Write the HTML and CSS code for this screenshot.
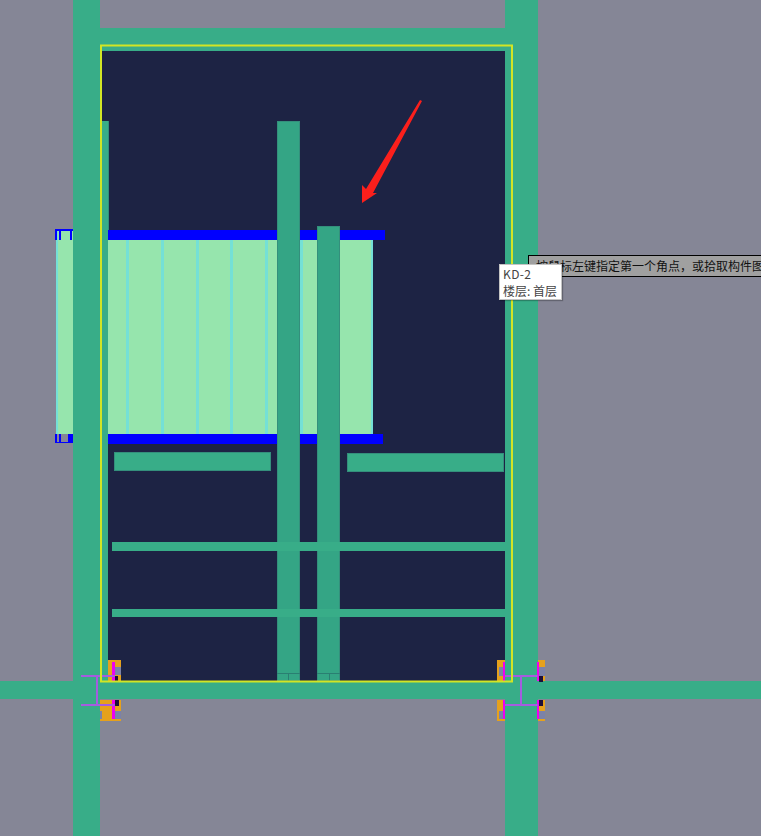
FILE: index.html
```html
<!DOCTYPE html>
<html lang="zh">
<head>
<meta charset="utf-8">
<title>KD-2</title>
<link rel="stylesheet" href="styles.css">
</head>
<body>
<main class="viewport">
<svg class="drawing" width="761" height="836" viewBox="0 0 761 836" shape-rendering="crispEdges">
  <rect class="wall" x="100" y="28" width="405" height="23"/>
  <rect class="room" x="102" y="51" width="403" height="630"/>

  <rect class="wall" x="102" y="121" width="6" height="560"/>
  <rect class="seam-fill" x="108" y="121" width="1" height="109"/>
  <rect class="beam" x="108" y="230" width="277" height="10"/>
  <rect class="slab" x="108" y="240" width="264" height="194"/>
  <rect class="beam" x="108" y="434" width="275" height="10"/>
  <g class="cyan">
    <rect x="126" y="240" width="3" height="194"/>
    <rect x="161" y="240" width="3" height="194"/>
    <rect x="196" y="240" width="3" height="194"/>
    <rect x="230" y="240" width="3" height="194"/>
    <rect x="265" y="240" width="3" height="194"/>
    <rect x="300" y="240" width="3" height="194"/>
    <rect x="371" y="240" width="2" height="194"/>
  </g>

  <rect class="slab" x="56" y="231" width="17" height="203"/>
  <rect class="cyan" x="56" y="231" width="2" height="203"/>
  <g class="beam">
    <rect x="55" y="229" width="18" height="2"/>
    <rect x="55" y="231" width="2" height="9"/>
    <rect x="59" y="231" width="2" height="9"/>
    <rect x="70" y="231" width="2" height="9"/>
    <rect x="55" y="434" width="2" height="9"/>
    <rect x="59" y="434" width="2" height="9"/>
    <rect x="68" y="434" width="5" height="9"/>
    <rect x="55" y="442" width="18" height="1"/>
  </g>

  <rect class="pillar" x="277.500" y="121.500" width="22" height="559"/>
  <rect class="pillar" x="317.500" y="226.500" width="22" height="454"/>
  <path class="seam" d="M277 673.500H300M288.500 673V681M317 673.500H340M329.500 673V681"/>

  <rect class="wall edged" x="114.500" y="452.500" width="156" height="18"/>
  <rect class="wall edged" x="347.500" y="453.500" width="156" height="18"/>
  <rect class="wall" x="112" y="542" width="393" height="9"/>
  <rect class="wall" x="112" y="609" width="393" height="8"/>

  <rect class="wall" x="73" y="0" width="27" height="836"/>
  <rect class="wall" x="505" y="0" width="33" height="836"/>
  <rect class="wall" x="0" y="681" width="761" height="18"/>

  <g>
    <rect class="amber" x="108" y="660" width="13" height="21"/>
    <rect class="amber" x="100" y="700" width="21" height="21"/>
    <rect class="amber" x="497" y="660" width="8" height="21"/>
    <rect class="amber" x="497" y="700" width="8" height="21"/>
    <rect class="amber" x="538" y="660" width="7" height="21"/>
    <rect class="amber" x="538" y="700" width="7" height="21"/>
    <rect class="steel" x="115" y="667" width="6" height="8"/>
    <rect class="steel" x="100" y="711" width="2" height="8"/>
    <rect class="steel" x="115" y="711" width="6" height="8"/>
    <rect class="steel" x="499" y="667" width="4" height="9"/>
    <rect class="steel" x="499" y="711" width="4" height="8"/>
    <rect class="steel" x="539" y="667" width="6" height="9"/>
    <rect class="steel" x="539" y="711" width="6" height="8"/>
    <rect class="ink" x="115" y="676" width="3" height="5"/>
    <rect class="ink" x="115" y="700" width="4" height="6"/>
    <rect class="ink" x="539" y="676" width="4" height="6"/>
    <rect class="ink" x="539" y="700" width="4" height="6"/>
    <rect class="magenta" x="112" y="662" width="3" height="19"/>
    <rect class="magenta" x="112" y="700" width="3" height="19"/>
    <rect class="magenta" x="503" y="662" width="2" height="19"/>
    <rect class="magenta" x="503" y="700" width="2" height="19"/>
    <rect class="magenta" x="537" y="662" width="2" height="19"/>
    <rect class="magenta" x="537" y="700" width="2" height="19"/>
  </g>
  <path class="violet" d="M81 676H115M81 705H115M96.500 676V705M505 676H538M505 705H538M520.500 676V705"/>
  <path class="outline" d="M101 682V45.500H512V682M100 681.500H513" shape-rendering="auto"/>
  <polygon class="arrow" points="420,100 422,101 373,193 377,193 362,203 362,185 366,189" shape-rendering="auto"/>
</svg>

<div class="hint">按鼠标左键指定第一个角点，或拾取构件图元</div>
<div class="tip">
  <div class="tip-name">KD-2</div>
  <div>楼层: 首层</div>
</div>
</main>
</body>
</html>
```

FILE: styles.css
```css
html, body {
  margin: 0;
  padding: 0;
  background: #858696;
}

.viewport {
  position: relative;
  width: 761px;
  height: 836px;
  overflow: hidden;
  font-family: "Noto Sans CJK SC", "Liberation Sans", sans-serif;
}

.drawing {
  display: block;
}

.wall { fill: #38ad88; }
.edged { stroke: #348f7c; stroke-width: 1; }
.pillar { fill: #34a585; stroke: #348f7c; stroke-width: 1; }
.room { fill: #1d2344; }
.beam { fill: #0000ff; }
.slab { fill: #96e5ad; }
.cyan { fill: #74e0d6; }
.seam { fill: none; stroke: #2a7f72; stroke-width: 1; }
.seam-fill { fill: #348f7c; }
.amber { fill: #e5a11c; }
.steel { fill: #7b82a8; }
.ink { fill: #1c0f3a; }
.magenta { fill: #f000f0; }
.violet { fill: none; stroke: #a55ce0; stroke-width: 2; }
.outline { fill: none; stroke: #d2e524; stroke-width: 2; }
.arrow { fill: #fb1f1c; }

.hint {
  position: absolute;
  left: 528px;
  top: 255px;
  width: 240px;
  height: 20px;
  border: 1px solid #000;
  background: #a0a0a0;
  color: #111;
  font-size: 12px;
  line-height: 20px;
  padding-left: 7px;
  white-space: nowrap;
}

.tip {
  position: absolute;
  left: 499px;
  top: 264px;
  width: 63px;
  height: 36px;
  box-sizing: border-box;
  border: 1px solid #c4c4c4;
  background: #fff;
  box-shadow: 1px 1px 1px rgba(0, 0, 0, 0.25);
  color: #444;
  font-size: 12px;
  line-height: 17px;
  padding: 0 0 0 3px;
  white-space: nowrap;
}

.tip-name {
  letter-spacing: 0.4px;
}
```
